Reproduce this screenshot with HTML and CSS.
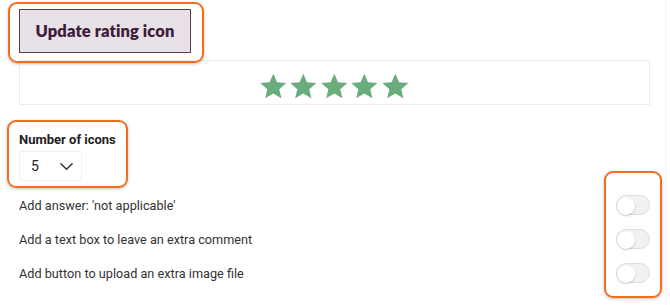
FILE: index.html
```html
<!DOCTYPE html>
<html>
<head>
<meta charset="utf-8">
<link rel="stylesheet" href="styles.css">
</head>
<body>
<div class="page">
  <button class="update-btn">Update rating icon</button>
  <div class="preview">
    <div class="stars">
      <svg viewBox="0 0 24 24" class="star"><path d="M12 1.5l3.1 7.2 7.8.6-5.9 5.1 1.8 7.6L12 18l-6.8 4 1.8-7.6-5.9-5.1 7.8-.6z"/></svg>
      <svg viewBox="0 0 24 24" class="star"><path d="M12 1.5l3.1 7.2 7.8.6-5.9 5.1 1.8 7.6L12 18l-6.8 4 1.8-7.6-5.9-5.1 7.8-.6z"/></svg>
      <svg viewBox="0 0 24 24" class="star"><path d="M12 1.5l3.1 7.2 7.8.6-5.9 5.1 1.8 7.6L12 18l-6.8 4 1.8-7.6-5.9-5.1 7.8-.6z"/></svg>
      <svg viewBox="0 0 24 24" class="star"><path d="M12 1.5l3.1 7.2 7.8.6-5.9 5.1 1.8 7.6L12 18l-6.8 4 1.8-7.6-5.9-5.1 7.8-.6z"/></svg>
      <svg viewBox="0 0 24 24" class="star"><path d="M12 1.5l3.1 7.2 7.8.6-5.9 5.1 1.8 7.6L12 18l-6.8 4 1.8-7.6-5.9-5.1 7.8-.6z"/></svg>
    </div>
  </div>
  <div class="count">
    <div class="count-label">Number of icons</div>
    <div class="select">
      <span>5</span>
      <svg viewBox="0 0 16 16" class="chev"><path d="M2 5l6 6 6-6" fill="none" stroke="#333" stroke-width="1.6" stroke-linecap="round" stroke-linejoin="round"/></svg>
    </div>
  </div>
  <div class="options">
    <div class="row"><span>Add answer: 'not applicable'</span><span class="toggle"><span class="knob"></span></span></div>
    <div class="row"><span>Add a text box to leave an extra comment</span><span class="toggle"><span class="knob"></span></span></div>
    <div class="row"><span>Add button to upload an extra image file</span><span class="toggle"><span class="knob"></span></span></div>
  </div>
</div>
<div class="mark mark-btn"></div>
<div class="mark mark-count"></div>
<div class="mark mark-toggles"></div>
<div class="scroll-edge"></div>
</body>
</html>
```

FILE: styles.css
```css
html, body { margin: 0; padding: 0; background: #fff; }
body { position: relative; width: 670px; height: 305px; overflow: hidden; font-family: Roboto, "Liberation Sans", sans-serif; color: #333; }
.page { display: flex; flex-direction: column; padding: 9px 20px 0 19px; }
.update-btn {
  align-self: flex-start;
  width: 172px; height: 44px;
  background: #e8e1e7;
  border: 1px solid #5b3a57;
  color: #3d1d3a;
  font-family: Lato, "Open Sans", sans-serif;
  font-weight: 800; font-size: 16.5px;
  padding: 0; margin: 0;
  letter-spacing: 0.1px;
}
.preview {
  margin-top: 7px; height: 43px;
  border: 1px solid #ececec;
  display: flex; align-items: center; justify-content: center;
}
.stars { display: flex; gap: 2px; margin-top: 8px; margin-left: -1px; }
.star { width: 28.6px; height: 28.6px; fill: #68ad7b; display: block; }
.count { margin-top: 27px; display: flex; flex-direction: column; }
.count-label { font-weight: 700; font-size: 13px; line-height: 16px; color: #222; }
.select {
  margin-top: 3px; box-sizing: border-box; width: 63px; height: 30px;
  border: 1px solid #f0f0f0;
  display: flex; align-items: center; justify-content: space-between;
  padding: 0 7px 0 11px; font-size: 14px; color: #222;
}
.chev { width: 15px; height: 15px; }
.options { margin-top: 7px; display: flex; flex-direction: column; }
.row { height: 34px; display: flex; align-items: center; justify-content: space-between; font-size: 12.7px; color: #333; }
.row span:first-child { margin-top: 1px; }
.toggle {
  width: 34px; height: 20px; box-sizing: border-box;
  border-radius: 10px; background: #f1f1f1; border: 1px solid #dedede;
  position: relative; display: block;
}
.knob {
  position: absolute; left: 0px; top: 0px; width: 18px; height: 18px; border-radius: 50%;
  background: #fff; box-shadow: 0 1px 2px rgba(0,0,0,0.2);
}
.mark { position: absolute; border: 2.5px solid #f36d1f; border-radius: 9px; box-sizing: border-box; box-shadow: 0 1px 3px rgba(0,0,0,0.25); }
.mark-btn { left: 8px; top: 2px; width: 196px; height: 61px; }
.mark-count { left: 7px; top: 120px; width: 121px; height: 68px; }
.mark-toggles { left: 604px; top: 171px; width: 58px; height: 127px; }
.scroll-edge { position: absolute; left: 665px; top: 0; width: 1px; height: 305px; background: #f0f0f0; }
```
